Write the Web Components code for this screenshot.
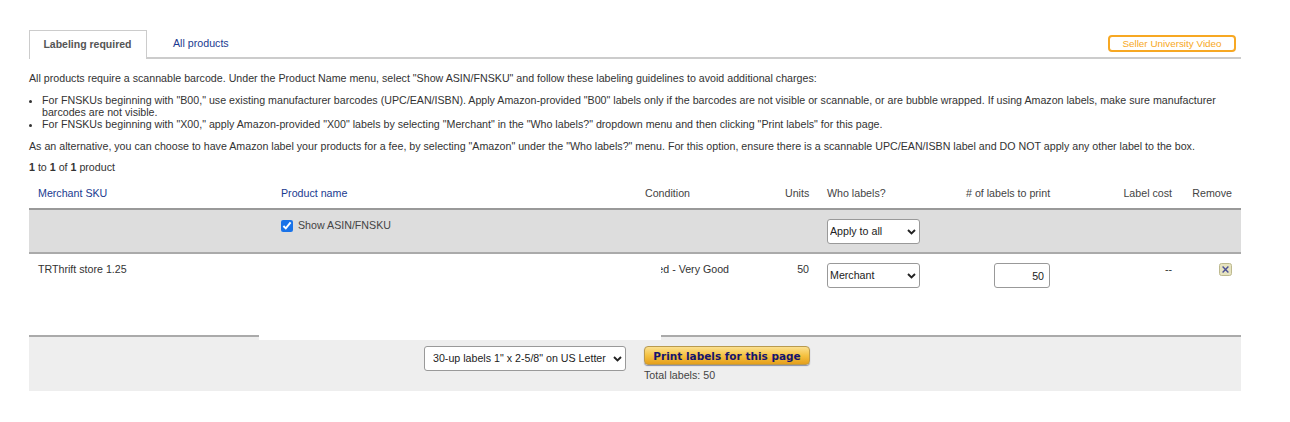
<!DOCTYPE html>
<html>
<head>
<meta charset="utf-8">
<title>Labeling required</title>
<style>
  html, body { margin: 0; background: #fff; }
  body { font: 10.67px/13px "Liberation Sans", Arial, sans-serif; color: #333; }
</style>
</head>
<body>
<label-page></label-page>

<script>
const GRID = '252px 364px 140px 24px 157px 84px 122px 69px';
// same chevron for every select
const CHEVRON = `url("data:image/svg+xml,%3Csvg xmlns='http://www.w3.org/2000/svg' width='9' height='6'%3E%3Cpath d='M1 1l3.5 3.5L8 1' fill='none' stroke='%23222' stroke-width='1.9'/%3E%3C/svg%3E")`;

class LabelTabs extends HTMLElement {
  constructor() {
    super();
    this.attachShadow({ mode: 'open' });
    this.shadowRoot.innerHTML = `
      <style>
        :host { display: flex; align-items: flex-end; height: 27px; border-bottom: 2px solid #ccc; }
        .active {
          box-sizing: border-box; width: 118px; height: 29px; margin-bottom: -2px; padding: 0 1px 2px 0;
          border: 1px solid #ccc; border-bottom: 0; background: #fff;
          display: flex; align-items: center; justify-content: center;
          font-weight: bold; color: #555; font-size: 10.5px;
        }
        .link { color: #1a3a8f; margin-left: 26px; align-self: center; }
        .video {
          box-sizing: border-box; margin-left: auto; margin-right: 5px; align-self: flex-start; margin-top: 5px;
          width: 128px; height: 17px; border: 2px solid #f7a823; border-radius: 4px; font-size: 9.9px;
          color: #f7a823; display: flex; align-items: center; justify-content: center;
        }
      </style>
      <div class="active">Labeling required</div>
      <div class="link">All products</div>
      <div class="video">Seller University Video</div>
    `;
  }
}

class LabelIntro extends HTMLElement {
  constructor() {
    super();
    this.attachShadow({ mode: 'open' });
    this.shadowRoot.innerHTML = `
      <style>
        :host { display: block; color: #333; padding-top: 13px; }
        p { margin: 0 0 9px; }
        ul { margin: 0 0 10px; padding: 0 0 0 13px; line-height: 12px; }
        li { padding-right: 8px; }
        .alt { margin-bottom: 8px; }
        .count { margin-bottom: 0; }
      </style>
      <p>All products require a scannable barcode. Under the Product Name menu, select "Show ASIN/FNSKU" and follow these labeling guidelines to avoid additional charges:</p>
      <ul>
        <li>For FNSKUs beginning with "B00," use existing manufacturer barcodes (UPC/EAN/ISBN). Apply Amazon-provided "B00" labels only if the barcodes are not visible or scannable, or are bubble wrapped. If using Amazon labels, make sure manufacturer barcodes are not visible.</li>
        <li>For FNSKUs beginning with "X00," apply Amazon-provided "X00" labels by selecting "Merchant" in the "Who labels?" dropdown menu and then clicking "Print labels" for this page.</li>
      </ul>
      <p class="alt">As an alternative, you can choose to have Amazon label your products for a fee, by selecting "Amazon" under the "Who labels?" menu. For this option, ensure there is a scannable UPC/EAN/ISBN label and DO NOT apply any other label to the box.</p>
      <p class="count"><b>1</b> to <b>1</b> of <b>1</b> product</p>
    `;
  }
}

class LabelTable extends HTMLElement {
  constructor() {
    super();
    this.attachShadow({ mode: 'open' });
    this.shadowRoot.innerHTML = `
      <style>
        :host { display: block; margin-top: 13px; }
        .row { display: grid; grid-template-columns: ${GRID}; }
        .head { height: 21px; border-bottom: 2px solid #999; color: #444; white-space: nowrap; }
        .link { color: #1a3a8f; }
        .sku { padding-left: 9px; }
        .right { text-align: right; }
        .who { padding-left: 18px; }
        .end { padding-right: 9px; }
        .apply { height: 42px; background: #ddd; border-bottom: 2px solid #aaa; }
        .show { display: flex; align-items: center; gap: 5px; margin-top: 9px; height: 13px; color: #444; }
        .show input { margin: 0; width: 12px; height: 12px; accent-color: #1a73e8; }
        .item { height: 81px; }
        .item > div { padding-top: 9px; }
        .cond { display: flex; justify-content: flex-end; width: 68px; margin-left: 16px; overflow: hidden; white-space: nowrap; }
        select, input[type=text] {
          font: inherit; color: #222; background: #fff; box-sizing: border-box; margin: 0;
          border: 1px solid #999; border-radius: 3px; outline: 0;
        }
        select {
          appearance: none; width: 93px; height: 25px; padding: 0 0 0 2px;
          background: #fff ${CHEVRON} no-repeat right 3px center;
        }
        .apply select { margin-top: 9px; }
        input[type=text] { width: 56px; height: 25px; text-align: right; padding: 0 5px; display: block; margin-left: 28px; }
        .x { display: inline-block; }
      </style>
      <div class="row head">
        <div class="sku link">Merchant SKU</div>
        <div class="link">Product name</div>
        <div>Condition</div>
        <div class="right">Units</div>
        <div class="who">Who labels?</div>
        <div># of labels to print</div>
        <div class="right">Label cost</div>
        <div class="right end">Remove</div>
      </div>
      <div class="row apply">
        <div></div>
        <div><label class="show"><input type="checkbox" checked>Show ASIN/FNSKU</label></div>
        <div></div>
        <div></div>
        <div class="who"><select><option>Apply to all</option></select></div>
        <div></div><div></div><div></div>
      </div>
      <div class="row item">
        <div class="sku">TRThrift store 1.25</div>
        <div></div>
        <div><div class="cond">Used - Very Good</div></div>
        <div class="right">50</div>
        <div class="who"><select><option>Merchant</option></select></div>
        <div><input type="text" value="50"></div>
        <div class="right">--</div>
        <div class="right end">
          <svg class="x" width="13" height="13" viewBox="0 0 13 13">
            <rect x=".5" y=".5" width="12" height="12" rx="2" fill="#e6e3bf" stroke="#bdb98f"/>
            <path d="M3.6 3.6l5.8 5.8M9.4 3.6l-5.8 5.8" stroke="#4a4f96" stroke-width="1.4"/>
          </svg>
        </div>
      </div>
    `;
  }
}

class PrintFooter extends HTMLElement {
  constructor() {
    super();
    this.attachShadow({ mode: 'open' });
    this.shadowRoot.innerHTML = `
      <style>
        :host { display: block; }
        .rule { display: flex; height: 5px; }
        .rule i { box-sizing: border-box; flex: 1; background: #eee; border-top: 2px solid #aaa; }
        .rule i:first-child { flex: 0 0 230px; }
        .rule b { flex: 0 0 402px; background: #fff; }
        .bar { height: 51px; background: #eee; display: flex; padding-left: 395px; padding-top: 6px; box-sizing: border-box; }
        select {
          appearance: none; font: inherit; color: #222; box-sizing: border-box;
          width: 202px; height: 25px; margin: 0 18px 0 0; padding: 0 0 0 8px;
          background: #fff ${CHEVRON} no-repeat right 3px center;
          border: 1px solid #999; border-radius: 3px; outline: 0;
        }
        .btn {
          display: block; box-sizing: border-box; width: 166px; height: 19px; padding: 0;
          font: bold 10.5px "DejaVu Sans", sans-serif; color: #14146e;
          border: 1px solid #b99a4e; border-radius: 4px;
          background: linear-gradient(#fbe08f, #f5c242 50%, #e59f1c);
          box-shadow: 0 1px 1px #8a8fa8;
        }
        .total { margin-top: 4px; color: #444; }
      </style>
      <div class="rule"><i></i><b></b><i></i></div>
      <div class="bar">
        <select><option>30-up labels 1" x 2-5/8" on US Letter</option></select>
        <div>
          <button class="btn">Print labels for this page</button>
          <div class="total">Total labels: 50</div>
        </div>
      </div>
    `;
  }
}

class LabelPage extends HTMLElement {
  constructor() {
    super();
    this.attachShadow({ mode: 'open' });
    this.shadowRoot.innerHTML = `
      <style>
        :host { display: block; box-sizing: border-box; width: 1241px; padding: 30px 0 31px 29px; }
      </style>
      <label-tabs></label-tabs>
      <label-intro></label-intro>
      <label-table></label-table>
      <print-footer></print-footer>
    `;
  }
}

customElements.define('label-tabs', LabelTabs);
customElements.define('label-intro', LabelIntro);
customElements.define('label-table', LabelTable);
customElements.define('print-footer', PrintFooter);
customElements.define('label-page', LabelPage);
</script>
</body>
</html>
